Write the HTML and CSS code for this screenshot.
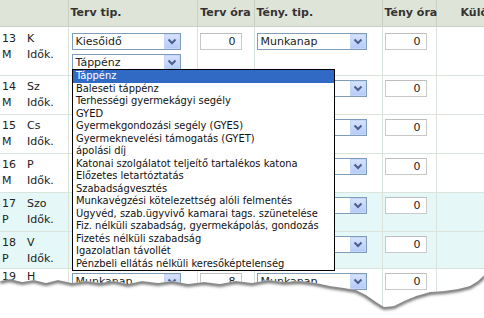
FILE: index.html
```html
<!DOCTYPE html>
<html lang="hu">
<head>
<meta charset="UTF-8">
<title>Jelenléti ív</title>
<link rel="stylesheet" href="styles.css">
</head>
<body>
<div class="sheet">
  <table class="grid">
    <colgroup>
      <col class="w-lbl"><col class="w-tip"><col class="w-ora"><col class="w-tip2"><col class="w-ora2"><col class="w-kul">
    </colgroup>
    <thead>
      <tr>
        <th></th>
        <th>Terv tip.</th>
        <th class="ctr">Terv óra</th>
        <th>Tény. tip.</th>
        <th class="ctr">Tény óra</th>
        <th class="kul">Különbözet</th>
      </tr>
    </thead>
    <tbody>
      <tr class="first">
        <td class="lbl"><div class="ln"><span class="n">13</span>K</div><div class="ln"><span class="n">M</span>Idők.</div></td>
        <td class="tip">
          <div class="combo"><span class="val">Kiesőidő</span><span class="btn"><svg width="16" height="15" viewBox="0 0 16 15"><path d="M4.5 5.5 L8 9 L11.5 5.5" fill="none" stroke="#4a5f8c" stroke-width="2"/></svg></span></div>
          <div class="combo"><span class="val">Táppénz</span><span class="btn"><svg width="16" height="15" viewBox="0 0 16 15"><path d="M4.5 5.5 L8 9 L11.5 5.5" fill="none" stroke="#4a5f8c" stroke-width="2"/></svg></span></div>
        </td>
        <td class="ora"><div class="num">0</div></td>
        <td class="tip2"><div class="combo wide"><span class="val">Munkanap</span><span class="btn"><svg width="16" height="15" viewBox="0 0 16 15"><path d="M4.5 5.5 L8 9 L11.5 5.5" fill="none" stroke="#4a5f8c" stroke-width="2"/></svg></span></div></td>
        <td class="ora"><div class="num">0</div></td>
        <td></td>
      </tr>
      <tr>
        <td class="lbl"><div class="ln"><span class="n">14</span>Sz</div><div class="ln"><span class="n">M</span>Idők.</div></td>
        <td class="tip"><div class="combo"><span class="val"></span><span class="btn"></span></div></td>
        <td class="ora"><div class="num"></div></td>
        <td class="tip2"><div class="combo wide"><span class="val"></span><span class="btn"><svg width="16" height="15" viewBox="0 0 16 15"><path d="M4.5 5.5 L8 9 L11.5 5.5" fill="none" stroke="#4a5f8c" stroke-width="2"/></svg></span></div></td>
        <td class="ora"><div class="num">0</div></td>
        <td></td>
      </tr>
      <tr>
        <td class="lbl"><div class="ln"><span class="n">15</span>Cs</div><div class="ln"><span class="n">M</span>Idők.</div></td>
        <td class="tip"><div class="combo"><span class="val"></span><span class="btn"></span></div></td>
        <td class="ora"><div class="num"></div></td>
        <td class="tip2"><div class="combo wide"><span class="val"></span><span class="btn"><svg width="16" height="15" viewBox="0 0 16 15"><path d="M4.5 5.5 L8 9 L11.5 5.5" fill="none" stroke="#4a5f8c" stroke-width="2"/></svg></span></div></td>
        <td class="ora"><div class="num">0</div></td>
        <td></td>
      </tr>
      <tr>
        <td class="lbl"><div class="ln"><span class="n">16</span>P</div><div class="ln"><span class="n">M</span>Idők.</div></td>
        <td class="tip"><div class="combo"><span class="val"></span><span class="btn"></span></div></td>
        <td class="ora"><div class="num"></div></td>
        <td class="tip2"><div class="combo wide"><span class="val"></span><span class="btn"><svg width="16" height="15" viewBox="0 0 16 15"><path d="M4.5 5.5 L8 9 L11.5 5.5" fill="none" stroke="#4a5f8c" stroke-width="2"/></svg></span></div></td>
        <td class="ora"><div class="num">0</div></td>
        <td></td>
      </tr>
      <tr class="we">
        <td class="lbl"><div class="ln"><span class="n">17</span>Szo</div><div class="ln"><span class="n">P</span>Idők.</div></td>
        <td class="tip"><div class="combo"><span class="val"></span><span class="btn"></span></div></td>
        <td class="ora"><div class="num"></div></td>
        <td class="tip2"><div class="combo wide"><span class="val"></span><span class="btn"><svg width="16" height="15" viewBox="0 0 16 15"><path d="M4.5 5.5 L8 9 L11.5 5.5" fill="none" stroke="#4a5f8c" stroke-width="2"/></svg></span></div></td>
        <td class="ora"><div class="num">0</div></td>
        <td></td>
      </tr>
      <tr class="we short">
        <td class="lbl"><div class="ln"><span class="n">18</span>V</div><div class="ln"><span class="n">P</span>Idők.</div></td>
        <td class="tip"><div class="combo"><span class="val"></span><span class="btn"></span></div></td>
        <td class="ora"><div class="num"></div></td>
        <td class="tip2"><div class="combo wide"><span class="val"></span><span class="btn"><svg width="16" height="15" viewBox="0 0 16 15"><path d="M4.5 5.5 L8 9 L11.5 5.5" fill="none" stroke="#4a5f8c" stroke-width="2"/></svg></span></div></td>
        <td class="ora"><div class="num">0</div></td>
        <td></td>
      </tr>
      <tr class="last">
        <td class="lbl"><div class="ln"><span class="n">19</span>H</div><div class="ln"><span class="n">M</span>Idők.</div></td>
        <td class="tip"><div class="combo"><span class="val">Munkanap</span><span class="btn"><svg width="16" height="15" viewBox="0 0 16 15"><path d="M4.5 5.5 L8 9 L11.5 5.5" fill="none" stroke="#4a5f8c" stroke-width="2"/></svg></span></div></td>
        <td class="ora"><div class="num">8</div></td>
        <td class="tip2"><div class="combo wide"><span class="val">Munkanap</span><span class="btn"><svg width="16" height="15" viewBox="0 0 16 15"><path d="M4.5 5.5 L8 9 L11.5 5.5" fill="none" stroke="#4a5f8c" stroke-width="2"/></svg></span></div></td>
        <td class="ora"><div class="num">0</div></td>
        <td></td>
      </tr>
    </tbody>
  </table>

  <!-- lenyitott lista -->
  <ul class="drop">
    <li class="sel">Táppénz</li>
    <li>Baleseti táppénz</li>
    <li>Terhességi gyermekágyi segély</li>
    <li>GYED</li>
    <li>Gyermekgondozási segély (GYES)</li>
    <li>Gyermeknevelési támogatás (GYET)</li>
    <li>ápolási díj</li>
    <li>Katonai szolgálatot teljeítő tartalékos katona</li>
    <li>Előzetes letartóztatás</li>
    <li>Szabadságvesztés</li>
    <li>Munkavégzési kötelezettség alóli felmentés</li>
    <li>Ügyvéd, szab.ügyvivő kamarai tags. szünetelése</li>
    <li>Fiz. nélküli szabadság, gyermekápolás, gondozás</li>
    <li>Fizetés nélküli szabadság</li>
    <li>Igazolatlan távollét</li>
    <li>Pénzbeli ellátás nélküli keresőképtelenség</li>
  </ul>

  <!-- szakadt papírszél -->
  <svg class="torn" width="484" height="318" viewBox="0 0 484 318">
    <defs>
      <clipPath id="below">
        <path d="M0 281 L10 279 L22 282 L34 280 L46 283 L58 280 L72 283 L86 281 L100 283 L114 281 L128 284 L142 281 L158 283 L172 281 L188 284 L204 282 L220 284 L236 281 L252 283 L268 280 L284 282 L300 281 L316 283 L330 286 L344 288 L356 290 L366 295 L376 302 L384 307 L394 306 L404 301 L416 296 L430 292 L444 291 L458 289 L470 286 L478 281 L484 275 L484 318 L0 318 Z"/>
      </clipPath>
      <filter id="soft" x="-5%" y="-50%" width="110%" height="200%">
        <feGaussianBlur stdDeviation="1.6"/>
      </filter>
    </defs>
    <path d="M0 281 L10 279 L22 282 L34 280 L46 283 L58 280 L72 283 L86 281 L100 283 L114 281 L128 284 L142 281 L158 283 L172 281 L188 284 L204 282 L220 284 L236 281 L252 283 L268 280 L284 282 L300 281 L316 283 L330 286 L344 288 L356 290 L366 295 L376 302 L384 307 L394 306 L404 301 L416 296 L430 292 L444 291 L458 289 L470 286 L478 281 L484 275 L484 318 L0 318 Z" fill="#fff"/>
    <g clip-path="url(#below)">
      <path d="M0 282 L10 280 L22 283 L34 281 L46 284 L58 281 L72 284 L86 282 L100 284 L114 282 L128 285 L142 282 L158 284 L172 282 L188 285 L204 283 L220 285 L236 282 L252 284 L268 281 L284 283 L300 282 L316 284 L330 287 L344 289 L356 291 L366 296 L376 303 L384 308 L394 307 L404 302 L416 297 L430 293 L444 292 L458 290 L470 287 L478 282 L485 276" fill="none" stroke="#666" stroke-width="3.5" filter="url(#soft)"/>
    </g>
  </svg>
</div>
</body>
</html>
```

FILE: styles.css
```css
/* ==== általános ==== */
*{box-sizing:border-box}
body{
  margin:0;
  overflow:hidden;
  background:#fff;
  font-family:"DejaVu Sans",sans-serif;
  font-size:11px;
  color:#222;
}
.sheet{position:relative;width:484px;height:318px;overflow:hidden}

/* ==== táblázat ==== */
.grid{border-collapse:collapse;table-layout:fixed;width:544px}
.w-lbl{width:68px}
.w-tip{width:129px}
.w-ora{width:57px}
.w-tip2{width:128px}
.w-ora2{width:54px}
.w-kul{width:108px}

.grid th{
  height:26px;padding:0 2px;
  background:#dfe4d9;color:#333;
  font-weight:bold;text-align:left;white-space:nowrap;
  border-right:1px solid #c8d1c3;border-bottom:1px solid #c8d1c3;
}
.grid th.ctr{text-align:center}
.grid th.kul{padding-left:24px}

.grid td{
  height:39px;padding:4px 0 0 2px;vertical-align:top;
  border-right:1px solid #dae4dd;border-bottom:1px solid #dae4dd;
}
.grid tr.first td{height:49px;padding-top:6px}
.grid tr.short td{height:37px}
.grid tr.we td{background:#e5f7f7}

.grid td.lbl{padding:3px 0 0 2px}
.grid tr.first td.lbl{padding-top:4px}
.grid tr.last td.lbl{padding-top:0}
.ln{line-height:16px;white-space:nowrap}
.ln .n{display:inline-block;width:25px}

.grid td.tip{padding-left:3px}
.grid td.tip2{padding-left:2px}

/* ==== legördülő mező ==== */
.combo{
  display:flex;align-items:center;
  width:109px;height:17px;
  border:1px solid #7f9db9;background:#fff;
}
.combo + .combo{margin-top:4px}
.combo.wide{width:110px}
.combo .val{flex:1;padding-left:3px;white-space:nowrap;overflow:hidden;line-height:15px}
.combo .btn{
  display:block;width:16px;height:15px;
  background:linear-gradient(#d5e2fd,#b7cbf6);
  border:1px solid #c6d6f8;
}
.combo .btn svg{display:block;margin:-1px 0 0 -1px}

.num{
  width:42px;height:17px;padding-right:5px;
  border:1px solid #c9c9c9;border-top-color:#bdbdbd;background:#fff;
  text-align:right;line-height:15px;
}

/* ==== lenyitott lista ==== */
.drop{
  position:absolute;left:72px;top:69px;
  width:263px;margin:0;padding:0;
  list-style:none;background:#fff;
  border:1px solid #000;
  font-family:"DejaVu Sans Condensed","DejaVu Sans",sans-serif;
}
.drop li{height:12.5px;line-height:12.5px;padding-left:3px;white-space:nowrap;overflow:hidden;color:#111}
.drop li.sel{background:#316ac5;color:#fff}

.torn{position:absolute;left:0;top:0;pointer-events:none}
```
